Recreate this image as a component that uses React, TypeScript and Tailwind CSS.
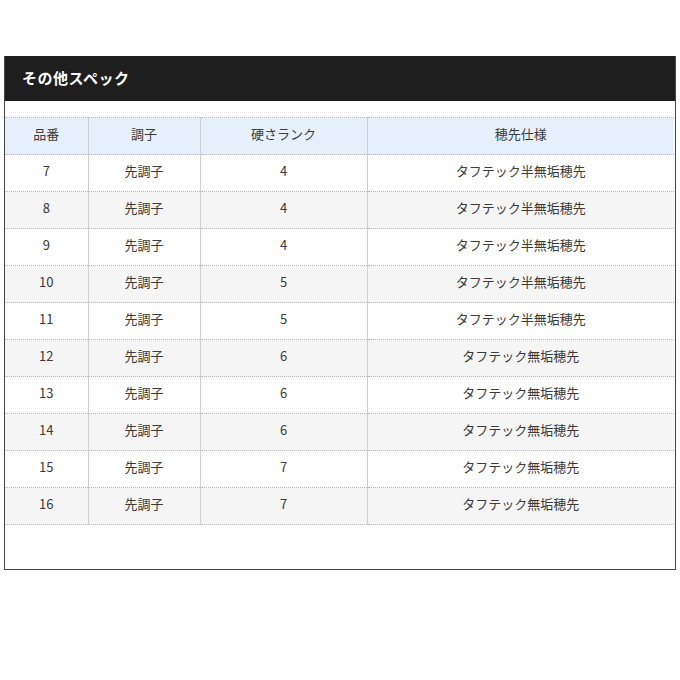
const rows: [string, string, string, string][] = [
  ["7", "先調子", "4", "タフテック半無垢穂先"],
  ["8", "先調子", "4", "タフテック半無垢穂先"],
  ["9", "先調子", "4", "タフテック半無垢穂先"],
  ["10", "先調子", "5", "タフテック半無垢穂先"],
  ["11", "先調子", "5", "タフテック半無垢穂先"],
  ["12", "先調子", "6", "タフテック無垢穂先"],
  ["13", "先調子", "6", "タフテック無垢穂先"],
  ["14", "先調子", "6", "タフテック無垢穂先"],
  ["15", "先調子", "7", "タフテック無垢穂先"],
  ["16", "先調子", "7", "タフテック無垢穂先"],
];

// dotted row rules, solid column rules
const cell =
  "h-[37px] pb-[4px] border-b border-b-[#b5b5b5] [border-bottom-style:dotted] text-center align-middle font-normal";
const mid = "border-x border-x-[#cfcfcf] [border-left-style:solid] [border-right-style:solid]";
const right = "border-r border-r-[#cfcfcf] [border-right-style:solid]";
const top = "border-t border-t-[#b5b5b5] [border-top-style:dotted]";

export default function App() {
  return (
    <div
      className="min-h-[680px] w-[680px] bg-white pt-[56px] pl-[4px]"
      style={{ fontFamily: '"Noto Sans CJK JP", "Noto Sans", sans-serif' }}
    >
      <div className="w-[672px] h-[514px] border border-[#444] border-t-0">
        {/* Section header */}
        <div className="h-[45px] bg-[#1e1e1e] flex items-center pl-[17px]">
          <h2 className="text-[15px] font-bold text-white tracking-[0.5px]">その他スペック</h2>
        </div>

        <table className="mt-[16px] w-[669px] border-collapse text-[13px] text-[#3a3a3a]">
          <thead>
            <tr className="bg-[#e6f0fc]">
              <th className={`${cell} ${top} w-[83px]`}>品番</th>
              <th className={`${cell} ${top} ${mid} w-[112px]`}>調子</th>
              <th className={`${cell} ${top} ${right} w-[167px]`}>硬さランク</th>
              <th className={`${cell} ${top}`}>穂先仕様</th>
            </tr>
          </thead>
          <tbody>
            {rows.map((r, i) => (
              <tr key={r[0]} className={i % 2 === 1 ? "bg-[#f5f5f5]" : "bg-white"}>
                <td className={cell}>{r[0]}</td>
                <td className={`${cell} ${mid}`}>{r[1]}</td>
                <td className={`${cell} ${right}`}>{r[2]}</td>
                <td className={cell}>{r[3]}</td>
              </tr>
            ))}
          </tbody>
        </table>
      </div>
    </div>
  );
}
